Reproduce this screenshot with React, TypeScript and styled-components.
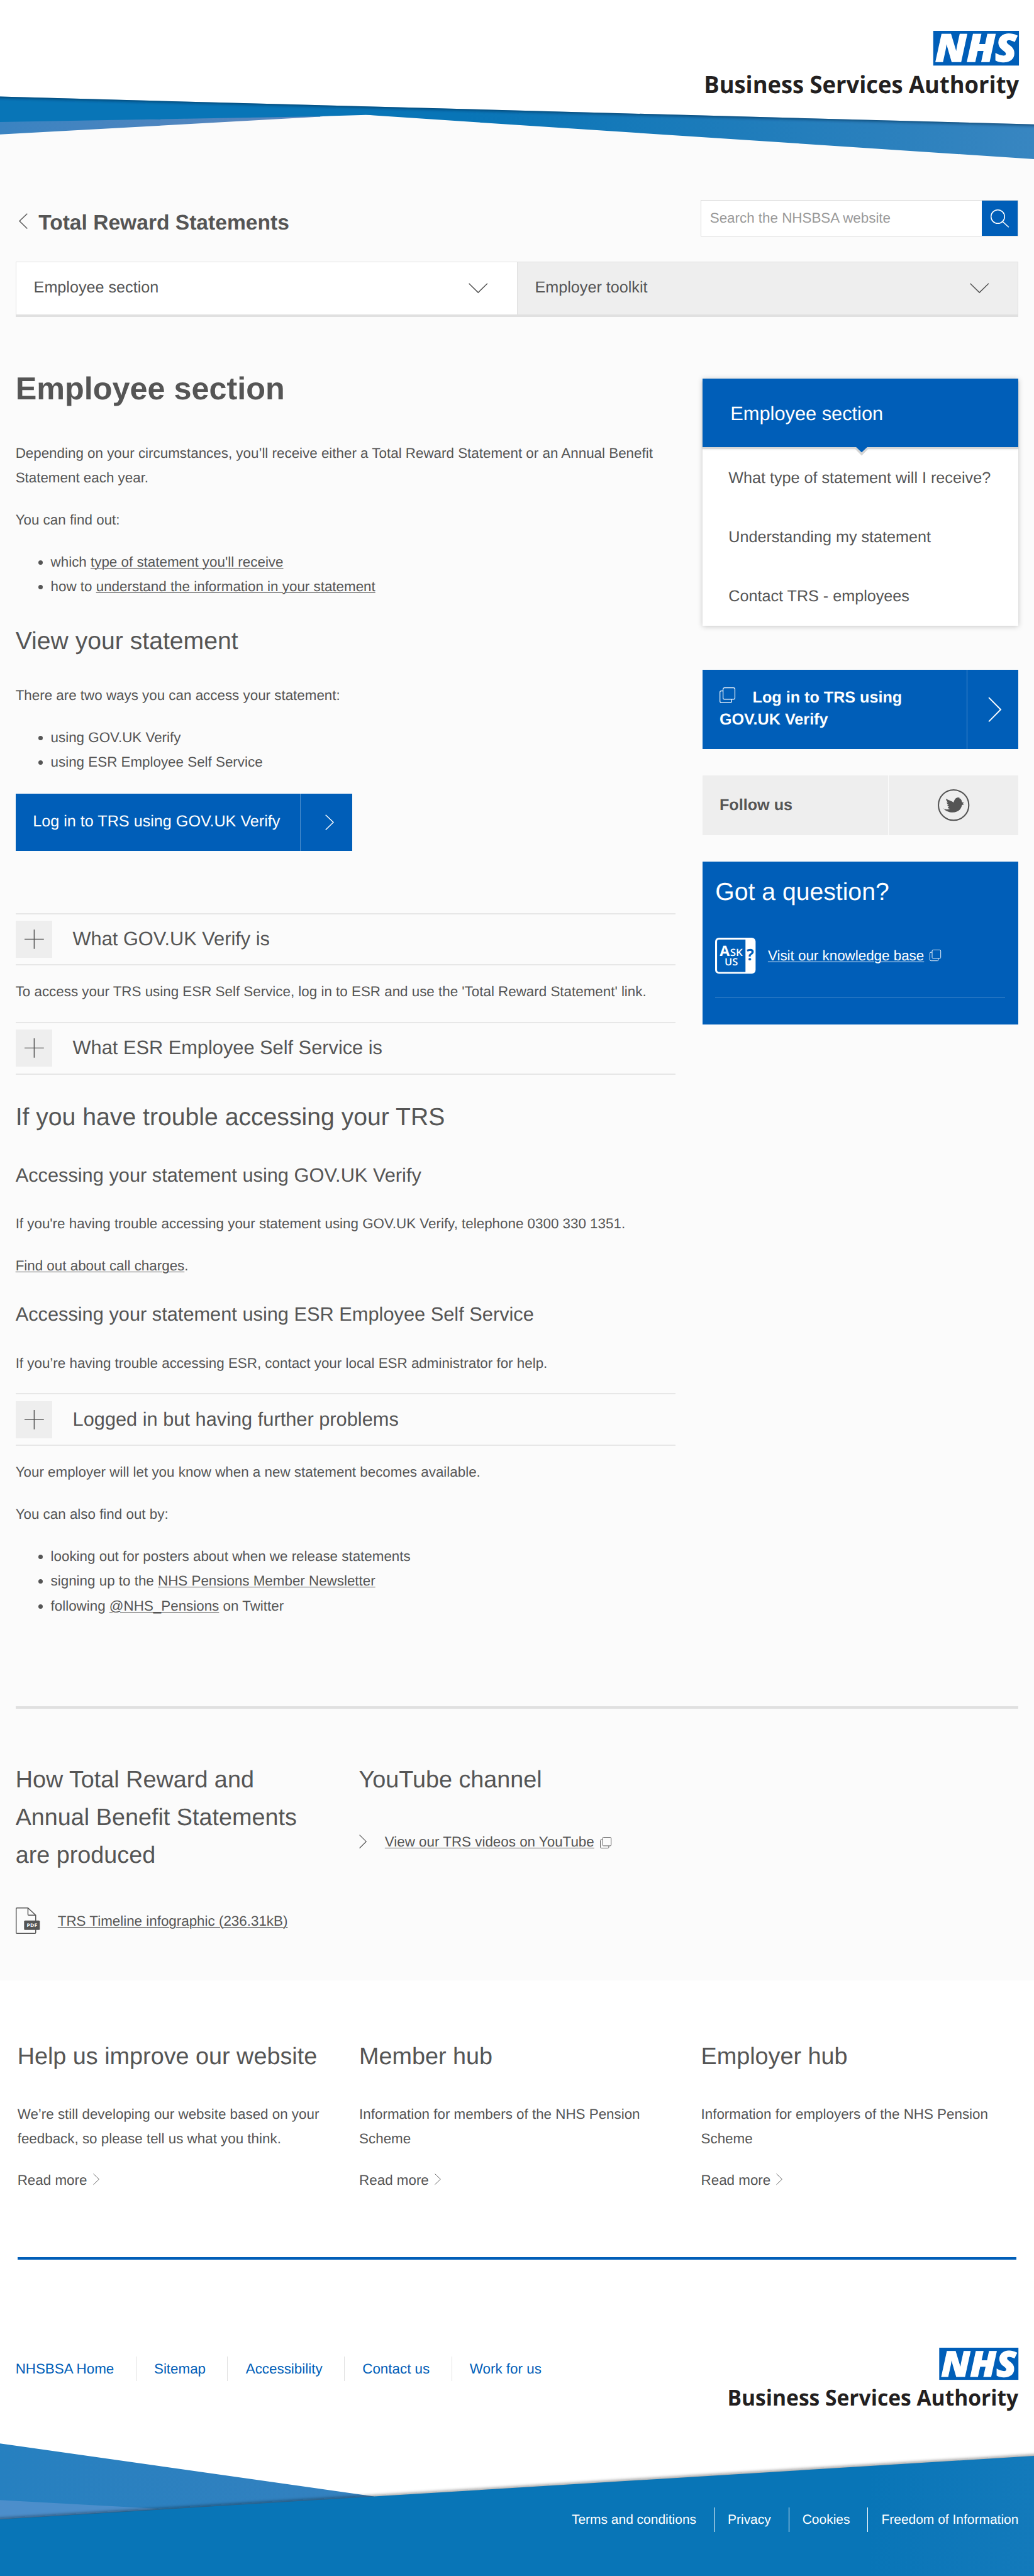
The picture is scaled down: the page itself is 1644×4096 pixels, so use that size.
import React from "react";
import styled, { createGlobalStyle } from "styled-components";

// One design unit, scaled to the page width of 1644px.
const u = (n: number) => `${Math.round(n * 1.39915 * 1000) / 1000}px`;

const ink = "#555555";
const blue = "#005eb8";
const rule = "#e0e0e0";
const softRule = "#e7e7e7";
const paper = "#fbfbfb";

const Global = createGlobalStyle`
  *, *::before, *::after { box-sizing: border-box; }
  body {
    margin: 0;
    background: #fff;
    color: ${ink};
    font-family: "Liberation Sans", Arial, sans-serif;
    font-size: ${u(16)};
    line-height: ${u(28)};
    text-rendering: geometricPrecision;
  }
  h1, h2, h3, p, ul { margin: 0; padding: 0; }
  a { color: inherit; text-decoration: none; }
  svg { display: block; flex: none; }
`;

/* ---------- icons ---------- */

const IconSvg = styled.svg<{ $w: number; $h: number }>`
  width: ${(p) => u(p.$w)};
  height: ${(p) => u(p.$h)};
  fill: none;
  stroke: currentColor;
  overflow: visible;
`;

const CHEVRONS = {
  left: "M9.5 0.5 L0.7 9 L9.5 17.5",
  right: "M0.5 0.5 L9.3 9 L0.5 17.5",
};

const SideChevron = ({ dir, w, h, stroke = 1 }: { dir: "left" | "right"; w: number; h: number; stroke?: number }) => (
  <IconSvg $w={w} $h={h} viewBox="0 0 10 18" preserveAspectRatio="none">
    <path d={CHEVRONS[dir]} strokeWidth={stroke} vectorEffect="non-scaling-stroke" />
  </IconSvg>
);

const DownChevron = () => (
  <IconSvg $w={21.8} $h={11.4} viewBox="0 0 21.8 11.4">
    <path d="M0.4 0.5 L10.9 10.8 L21.4 0.5" strokeWidth="1.05" />
  </IconSvg>
);

const SearchIcon = () => (
  <IconSvg $w={21} $h={20.5} viewBox="0 0 21 20.5">
    <circle cx="8.2" cy="8.2" r="7.7" strokeWidth="1.1" />
    <path d="M13.6 13.8 L20.6 20.2" strokeWidth="1.1" />
  </IconSvg>
);

const PlusIcon = () => (
  <IconSvg $w={22} $h={22} viewBox="0 0 22 22">
    <path d="M11 0 V22 M0 11 H22" strokeWidth="1.05" />
  </IconSvg>
);

const WindowsIcon = ({ w, h, stroke = 1.2 }: { w: number; h: number; stroke?: number }) => (
  <IconSvg $w={w} $h={h} viewBox="0 0 18 18" preserveAspectRatio="none">
    <rect x="4" y="0.5" width="13.5" height="13.3" rx="1.6" strokeWidth={stroke} vectorEffect="non-scaling-stroke" />
    <path
      d="M4 4.1 H2 Q0.5 4.1 0.5 5.6 V16 Q0.5 17.5 2 17.5 H12.3 Q13.8 17.5 13.8 16 V13.8"
      strokeWidth={stroke}
      vectorEffect="non-scaling-stroke"
    />
  </IconSvg>
);

const TwitterIcon = () => (
  <IconSvg $w={36} $h={36} viewBox="0 0 36 36">
    <circle cx="18" cy="18" r="17.25" strokeWidth="1.5" />
    <path
      fill="currentColor"
      stroke="none"
      d="M9.4 10.8 C12.5 12.6 15.6 13.2 18 15.1 C18.6 12.2 20 10 22.2 9.5 C23 9.2 23.8 9 24 9 L23.4 9.8 L24.9 9.5 L24.4 10.2 C26.5 10.7 27.2 12.5 27.5 14.4 C28.4 15 29.2 15.2 30 15.1 C29.6 15.7 29 16 28.3 16.1 C28.9 16.5 29.4 16.6 29.9 16.6 C29.3 17.4 28.4 17.8 27.5 17.8 C26.6 23 22.6 26.3 17 26.3 C12.4 26.3 8.6 24.6 6.3 21.4 C8.6 23 11.6 23.4 13.9 22.1 C12.3 21.9 11.4 21.2 11.3 20.3 L13.1 20 C11.6 19.5 10.9 18.6 10.9 17.7 L12.4 17.8 C11.1 17 10.2 15.9 10.2 14.8 L11.6 15 C10.2 13.8 9.4 12.4 9.4 10.8 Z"
    />
  </IconSvg>
);

const BrandText = styled.text<{ $outline?: number }>`
  font-family: "Open Sans", "Noto Sans", sans-serif;
  stroke: ${(p) => (p.$outline ? "#fff" : "none")};
  stroke-width: ${(p) => p.$outline ?? 0};
`;

const AskUsIcon = () => (
  <IconSvg $w={46} $h={41} viewBox="0 0 46 41">
    <rect width="46" height="41" rx="4.4" fill="#fff" stroke="none" />
    <path d="M34.5 2.1 V38.9 H4.4 Q2.2 38.9 2.2 36.7 V4.3 Q2.2 2.1 4.4 2.1 Z" fill={blue} stroke="none" />
    <BrandText x="5.2" y="20.4" fontSize="16.3" fontWeight="700" fill="#fff" textLength="11.4" lengthAdjust="spacingAndGlyphs">A</BrandText>
    <BrandText x="17" y="20.4" fontSize="11.3" fontWeight="600" fill="#fff" textLength="14.3" lengthAdjust="spacingAndGlyphs">SK</BrandText>
    <BrandText x="10.8" y="31.3" fontSize="11.3" fontWeight="600" fill="#fff" textLength="15.2" lengthAdjust="spacingAndGlyphs">US</BrandText>
    <BrandText x="35.8" y="25.7" fontSize="18" fontWeight="700" fill={blue} textLength="8.4" lengthAdjust="spacingAndGlyphs">?</BrandText>
  </IconSvg>
);

const PdfIcon = () => (
  <IconSvg $w={27.5} $h={30} viewBox="0 0 27.5 30">
    <path
      d="M22.7 25 V28.6 Q22.7 29.5 21.8 29.5 H1.4 Q0.5 29.5 0.5 28.6 V1.4 Q0.5 0.5 1.4 0.5 H13.9 L22.7 8.8 V15 M13.9 0.5 V7.9 Q13.9 8.8 14.8 8.8 H22.7"
      strokeWidth="1.05"
      strokeLinejoin="round"
    />
    <rect x="9.5" y="14.8" width="17.9" height="10.7" rx="1.1" fill="currentColor" stroke="none" />
    <BrandText x="12.6" y="22" fontSize="5.4" fontWeight="700" fill="#fff" textLength="11.8" lengthAdjust="spacingAndGlyphs">PDF</BrandText>
  </IconSvg>
);

/* ---------- logo ---------- */

const LogoSvg = styled.svg<{ $scale: number }>`
  width: ${(p) => u(356 * p.$scale)};
  height: ${(p) => u(80 * p.$scale)};
  overflow: visible;
`;

const Logo = ({ scale = 1 }: { scale?: number }) => (
  <LogoSvg $scale={scale} viewBox="0 0 356 80">
    <rect x="258.6" width="97.4" height="39.5" fill={blue} />
    <BrandText
      $outline={0.9}
      x="260.9"
      y="35.3"
      fontSize="43.6"
      fontWeight="800"
      fontStyle="italic"
      fill="#fff"
      textLength="92.6"
      lengthAdjust="spacingAndGlyphs"
    >
      NHS
    </BrandText>
    <BrandText x="-2" y="70.8" fontSize="27.1" fontWeight="700" fill="#231f20" textLength="358" lengthAdjust="spacingAndGlyphs">
      Business Services Authority
    </BrandText>
  </LogoSvg>
);

/* ---------- layout ---------- */

const Page = styled.div`
  width: ${u(1175)};
  height: 4096px;
  overflow: hidden;
  background: #fff;
`;

const Grey = styled.div`
  height: ${u(2251 - 185)};
  background: ${paper};
`;

const Stack = styled.div<{ $h: number }>`
  display: grid;
  height: ${(p) => u(p.$h)};
  & > * {
    grid-area: 1 / 1;
  }
`;

const Wave = styled.svg`
  width: 100%;
  height: 100%;
`;

const HeaderLogo = styled.div`
  justify-self: end;
  align-self: start;
  padding: ${u(34.8)} ${u(17.4)} 0 0;
`;

const TopBar = styled.div`
  display: flex;
  align-items: flex-start;
  height: ${u(84)};
  padding: ${u(42)} ${u(17.6)} 0 ${u(21.6)};
`;

const BackLink = styled.a`
  padding-top: ${u(15.2)};
`;

const SiteTitle = styled.h2`
  margin: ${u(11.6)} auto 0 ${u(12.1)};
  font-size: ${u(24)};
  line-height: ${u(30)};
`;

const SearchForm = styled.form`
  display: flex;
  width: ${u(361.4)};
  height: ${u(42)};
  border: ${u(1)} solid #dbdbdb;
  background: #fff;
`;

const SearchInput = styled.input`
  flex: 1;
  min-width: 0;
  border: 0;
  padding: 0 ${u(10)} ${u(0.4)};
  background: none;
  font: inherit;
  color: ${ink};
  text-rendering: geometricPrecision;
  &::placeholder {
    color: #999;
    opacity: 1;
  }
`;

const SearchButton = styled.button`
  display: flex;
  align-items: center;
  justify-content: center;
  width: ${u(41)};
  border: 0;
  padding: 0;
  background: ${blue};
  color: #fff;
`;

const Tabs = styled.nav`
  display: flex;
  margin: ${u(28)} ${u(17.6)} 0;
  height: ${u(63)};
  border: ${u(1)} solid ${rule};
  border-bottom-width: ${u(3)};
`;

const Tab = styled.a<{ $active?: boolean }>`
  display: flex;
  flex: 1;
  align-items: center;
  justify-content: space-between;
  padding: 0 ${u(32.8)} 0 ${u(20)};
  background: ${(p) => (p.$active ? "#fff" : "#eeeeee")};
  border-left: ${(p) => (p.$active ? "0" : u(1))} solid ${rule};
  font-size: ${u(18)};
`;

const TabLabel = styled.span`
  padding-bottom: ${u(0.6)};
`;

const Main = styled.main`
  display: flex;
  justify-content: space-between;
  height: ${u(1939 - 360)};
  padding: 0 ${u(17.6)};
`;

const Article = styled.article`
  width: ${u(750.2)};
  padding-top: ${u(54.7)};
`;

const H1 = styled.h1`
  font-size: ${u(36)};
  line-height: ${u(54)};
`;

const H2 = styled.h2<{ $mt?: number; $size?: number }>`
  margin-top: ${(p) => u(p.$mt ?? 0)};
  font-size: ${(p) => u(p.$size ?? 28)};
  line-height: ${u(43)};
  font-weight: 400;
`;

const H3 = styled.h3<{ $mt?: number }>`
  margin-top: ${(p) => u(p.$mt ?? 0)};
  font-size: ${u(22)};
  line-height: ${u(34)};
  font-weight: 400;
`;

const P = styled.p<{ $mt?: number }>`
  margin-top: ${(p) => u(p.$mt ?? 20)};
`;

const List = styled.ul`
  && {
    margin-top: ${u(20)};
    padding-left: ${u(40)};
  }
`;

const Link = styled.a`
  text-decoration: underline;
  text-decoration-thickness: ${u(1)};
  text-underline-offset: ${u(1.2)};
`;

const ActionButton = styled.a`
  display: flex;
  width: ${u(382.4)};
  height: ${u(65)};
  margin-top: ${u(22.4)};
  background: ${blue};
  color: #fff;
  font-size: ${u(18)};
  line-height: ${u(63)};
`;

const ActionLabel = styled.span`
  width: ${u(323.3)};
  padding-left: ${u(19.7)};
  white-space: nowrap;
`;

const ActionArrow = styled.span`
  display: flex;
  flex: 1;
  align-items: center;
  padding-left: ${u(28)};
  border-left: ${u(1)} solid #4d8ecd;
`;

const AccordionBar = styled.div<{ $mt: number }>`
  display: flex;
  align-items: center;
  height: ${u(60)};
  margin-top: ${(p) => u(p.$mt)};
  border: solid ${softRule};
  border-width: 2px 0;
  font-size: ${u(22)};
`;

const PlusBox = styled.span`
  display: flex;
  align-items: center;
  justify-content: center;
  width: ${u(42)};
  height: ${u(42)};
  margin-right: ${u(23)};
  background: #eeeeee;
`;

const AccordionLabel = styled.span`
  padding-bottom: ${u(1.4)};
`;

const Accordion = ({ mt, title }: { mt: number; title: string }) => (
  <AccordionBar $mt={mt}>
    <PlusBox>
      <PlusIcon />
    </PlusBox>
    <AccordionLabel>{title}</AccordionLabel>
  </AccordionBar>
);

const Sidebar = styled.aside`
  width: ${u(359.2)};
  padding-top: ${u(70)};
`;

const SideMenu = styled.nav`
  height: ${u(281.2)};
  background: #fff;
  box-shadow: 0 ${u(1)} ${u(6)} rgba(0, 0, 0, 0.22);
`;

const SideMenuTitle = styled.div`
  position: relative;
  height: ${u(78.2)};
  padding-left: ${u(31.8)};
  background: ${blue};
  box-shadow: 0 ${u(2)} 0 #d5d5d5, 0 ${u(3)} ${u(2)} rgba(0, 0, 0, 0.15);
  color: #fff;
  font-size: ${u(22)};
  line-height: ${u(79.4)};
`;

const Pointer = styled.svg`
  position: absolute;
  left: ${u(171.2)};
  top: ${u(78)};
  width: ${u(20)};
  height: ${u(10)};
`;

const SideMenuList = styled.div`
  padding-top: ${u(2.5)};
`;

const SideMenuItem = styled.a`
  display: block;
  padding-left: ${u(29.6)};
  font-size: ${u(18)};
  line-height: ${u(67)};
`;

const LoginPanel = styled.a`
  display: flex;
  height: ${u(90)};
  margin-top: ${u(49.9)};
  background: ${blue};
  color: #fff;
  font-size: ${u(18)};
  font-weight: 700;
  line-height: ${u(25)};
`;

const LoginText = styled.span`
  width: ${u(300.1)};
  padding: ${u(19.2)} 0 0 ${u(19.4)};
`;

const LoginFirstLine = styled.span`
  display: flex;
  gap: ${u(19.6)};
`;

const LoginIcon = styled.span`
  padding-top: ${u(1.1)};
`;

const LoginArrow = styled.span`
  display: flex;
  flex: 1;
  align-items: center;
  padding-left: ${u(24)};
  border-left: ${u(1)} solid #4d8ecd;
`;

const FollowRow = styled.div`
  display: grid;
  grid-template-columns: ${u(211)} 1fr;
  gap: ${u(1)};
  height: ${u(68)};
  margin-top: ${u(30)};
`;

const FollowCell = styled.div<{ $center?: boolean }>`
  display: flex;
  align-items: center;
  justify-content: ${(p) => (p.$center ? "center" : "flex-start")};
  padding-left: ${(p) => (p.$center ? "0" : u(19.4))};
  background: #eeeeee;
  font-size: ${u(18)};
  font-weight: 700;
`;

const QuestionPanel = styled.section`
  height: ${u(185)};
  margin-top: ${u(30)};
  padding: ${u(14)} ${u(15)} 0 ${u(14.6)};
  background: ${blue};
  color: #fff;
`;

const QuestionRow = styled.div`
  display: flex;
  align-items: center;
  height: ${u(68)};
  margin-top: ${u(29.4)};
  padding-bottom: ${u(26.6)};
  border-bottom: ${u(1)} solid #4d8ecd;
`;

const QuestionLink = styled(Link)`
  margin: 0 ${u(6.6)} 0 ${u(13.8)};
`;

const Divider = styled.hr<{ $color: string; $inset: number; $mt?: number }>`
  height: ${u(3)};
  margin: ${(p) => u(p.$mt ?? 0)} ${(p) => u(p.$inset)} 0;
  border: 0;
  background: ${(p) => p.$color};
`;

const Resources = styled.section`
  display: flex;
  gap: ${u(40.2)};
  padding: ${u(59.3)} ${u(17.6)} 0;
`;

const ResourceColumn = styled.div`
  width: ${u(350)};
`;

const ResourceRow = styled.div<{ $mt: number; $gap: number }>`
  display: flex;
  align-items: center;
  gap: ${(p) => u(p.$gap)};
  height: ${u(30)};
  margin-top: ${(p) => u(p.$mt)};
  white-space: nowrap;
`;

const TrailingIcon = styled.span`
  margin-left: ${u(-14.2)};
  padding-top: ${u(3)};
`;

const Hubs = styled.section`
  display: grid;
  grid-template-columns: repeat(3, ${u(388.4)});
  padding: ${u(64.4)} 0 0 ${u(19.8)};
`;

const HubText = styled(P)`
  width: ${u(350)};
`;

const ReadMore = styled.a`
  display: flex;
  align-items: flex-start;
  gap: ${u(6.6)};
  margin-top: ${u(19)};
`;

const ReadMoreArrow = styled.span`
  padding-top: ${u(6.6)};
`;

const FooterTop = styled.div`
  display: flex;
  justify-content: space-between;
  align-items: flex-start;
  height: ${u(192.2)};
  padding: ${u(100.2)} ${u(17.4)} 0 ${u(17.6)};
`;

const FooterLinks = styled.nav`
  display: flex;
  margin-top: ${u(10)};
  color: ${blue};
`;

const FooterLink = styled.a`
  height: ${u(28)};
  & + & {
    margin-left: ${u(24.6)};
    padding-left: ${u(20.2)};
    border-left: ${u(1)} solid ${rule};
  }
`;

const LegalLinks = styled.nav`
  display: flex;
  justify-self: end;
  align-self: start;
  padding: ${u(89.3)} ${u(17.6)} 0 0;
  color: #fff;
  font-size: ${u(15)};
`;

const LegalLink = styled.a`
  height: ${u(28)};
  & + & {
    margin-left: ${u(20)};
    padding-left: ${u(15)};
    border-left: ${u(1)} solid #fff;
  }
`;

/* ---------- waves ---------- */

const HEAD_BODY = "M0 109.8 L1175 141.3 V180.8 L425 131.2 Q419 130.4 410 130.8 L367 132.1 L0 138.6 Z";

const HeaderWave = () => (
  <Wave viewBox="0 0 1175 185" preserveAspectRatio="none">
    <defs>
      <linearGradient id="headBody" x1="0" x2="1">
        <stop offset="0" stopColor="#0875b7" />
        <stop offset="0.45" stopColor="#0875b7" />
        <stop offset="0.85" stopColor="#2a80bd" />
        <stop offset="1" stopColor="#3886c1" />
      </linearGradient>
      <linearGradient id="headWedge" x1="0" x2="1">
        <stop offset="0" stopColor="#3a83c1" />
        <stop offset="1" stopColor="#6087bd" />
      </linearGradient>
      <clipPath id="headClip">
        <path d={HEAD_BODY} />
      </clipPath>
      <filter id="headBlur" x="-5%" y="-50%" width="110%" height="200%">
        <feGaussianBlur stdDeviation="1.6" />
      </filter>
    </defs>
    <path d="M0 109.8 L1175 141.3 V186 H0 Z" fill={paper} />
    <path d="M0 138 L375 131.6 L355 133.2 L0 152.8 Z" fill="url(#headWedge)" />
    <path d={HEAD_BODY} fill="url(#headBody)" />
    <g clipPath="url(#headClip)">
      <path d="M-20 108.4 L1195 141" stroke="#0a2f52" strokeOpacity="0.62" strokeWidth="5" fill="none" filter="url(#headBlur)" />
    </g>
  </Wave>
);

const FooterWave = () => (
  <Wave viewBox="0 2760 1175 168" preserveAspectRatio="none">
    <defs>
      <linearGradient id="footBody" x1="0" x2="1">
        <stop offset="0.84" stopColor="#0875b7" />
        <stop offset="0.9" stopColor="#0d77b9" />
        <stop offset="1" stopColor="#137abb" />
      </linearGradient>
      <linearGradient id="footSky" x1="0" x2="1">
        <stop offset="0" stopColor="#2680c0" />
        <stop offset="1" stopColor="#3481bf" />
      </linearGradient>
      <filter id="footBlur" x="-5%" y="-50%" width="110%" height="200%">
        <feGaussianBlur stdDeviation="2" />
      </filter>
    </defs>
    <path d="M0 2776.6 L425 2836.9 V2863 H0 Z" fill="url(#footSky)" />
    <path d="M0 2840.9 L185 2851 L0 2863 Z" fill="#4c8ecb" />
    <path d="M-20 2865.2 L425 2838 L1195 2790.6" stroke="#1a1a1a" strokeOpacity="0.45" strokeWidth="5" fill="none" filter="url(#footBlur)" />
    <path d="M0 2863 L425 2836.9 L1175 2790.8 V2930 H0 Z" fill="url(#footBody)" />
  </Wave>
);

const HUBS = [
  { title: "Help us improve our website", text: "We’re still developing our website based on your feedback, so please tell us what you think." },
  { title: "Member hub", text: "Information for members of the NHS Pension Scheme" },
  { title: "Employer hub", text: "Information for employers of the NHS Pension Scheme" },
];

export default function App() {
  return (
    <Page>
      <Global />
      <Stack $h={185}>
        <HeaderWave />
        <HeaderLogo>
          <Logo />
        </HeaderLogo>
      </Stack>

      <Grey>
        <TopBar>
          <BackLink>
            <SideChevron dir="left" w={10} h={18} stroke={1.4} />
          </BackLink>
          <SiteTitle>Total Reward Statements</SiteTitle>
          <SearchForm>
            <SearchInput placeholder="Search the NHSBSA website" />
            <SearchButton type="button">
              <SearchIcon />
            </SearchButton>
          </SearchForm>
        </TopBar>

        <Tabs>
          <Tab $active>
            <TabLabel>Employee section</TabLabel>
            <DownChevron />
          </Tab>
          <Tab>
            <TabLabel>Employer toolkit</TabLabel>
            <DownChevron />
          </Tab>
        </Tabs>

        <Main>
          <Article>
            <H1>Employee section</H1>
            <P $mt={32.25}>
              Depending on your circumstances, you’ll receive either a Total Reward Statement or an Annual Benefit Statement each year.
            </P>
            <P>You can find out:</P>
            <List>
              <li>
                which <Link>type of statement you'll receive</Link>
              </li>
              <li>
                how to <Link>understand the information in your statement</Link>
              </li>
            </List>
            <H2 $mt={26.8}>View your statement</H2>
            <P $mt={25.3}>There are two ways you can access your statement:</P>
            <List>
              <li>using GOV.UK Verify</li>
              <li>using ESR Employee Self Service</li>
            </List>
            <ActionButton>
              <ActionLabel>Log in to TRS using GOV.UK Verify</ActionLabel>
              <ActionArrow>
                <SideChevron dir="right" w={10} h={18} stroke={1.4} />
              </ActionArrow>
            </ActionButton>
            <Accordion mt={70.1} title="What GOV.UK Verify is" />
            <P $mt={15.4}>To access your TRS using ESR Self Service, log in to ESR and use the 'Total Reward Statement' link.</P>
            <Accordion mt={20.5} title="What ESR Employee Self Service is" />
            <H2 $mt={27.2}>If you have trouble accessing your TRS</H2>
            <H3 $mt={27.1}>Accessing your statement using GOV.UK Verify</H3>
            <P $mt={24.2}>If you're having trouble accessing your statement using GOV.UK Verify, telephone 0300 330 1351.</P>
            <P>
              <Link>Find out about call charges</Link>.
            </P>
            <H3 $mt={23.8}>Accessing your statement using ESR Employee Self Service</H3>
            <P $mt={24.5}>If you’re having trouble accessing ESR, contact your local ESR administrator for help.</P>
            <Accordion mt={20.4} title="Logged in but having further problems" />
            <P $mt={15.4}>Your employer will let you know when a new statement becomes available.</P>
            <P>You can also find out by:</P>
            <List>
              <li>looking out for posters about when we release statements</li>
              <li>
                signing up to the <Link>NHS Pensions Member Newsletter</Link>
              </li>
              <li>
                following <Link>@NHS_Pensions</Link> on Twitter
              </li>
            </List>
          </Article>

          <Sidebar>
            <SideMenu>
              <SideMenuTitle>
                Employee section
                <Pointer viewBox="0 0 20 10">
                  <path d="M0.5 0 L10 9.7 L19.5 0 Z" fill="#d5d5d5" />
                  <path d="M3.7 0 L10 5.9 L16.3 0 Z" fill={blue} />
                </Pointer>
              </SideMenuTitle>
              <SideMenuList>
                <SideMenuItem>What type of statement will I receive?</SideMenuItem>
                <SideMenuItem>Understanding my statement</SideMenuItem>
                <SideMenuItem>Contact TRS - employees</SideMenuItem>
              </SideMenuList>
            </SideMenu>

            <LoginPanel>
              <LoginText>
                <LoginFirstLine>
                  <LoginIcon>
                    <WindowsIcon w={18} h={17.6} />
                  </LoginIcon>
                  Log in to TRS using
                </LoginFirstLine>
                GOV.UK Verify
              </LoginText>
              <LoginArrow>
                <SideChevron dir="right" w={15.4} h={29} stroke={1.9} />
              </LoginArrow>
            </LoginPanel>

            <FollowRow>
              <FollowCell>Follow us</FollowCell>
              <FollowCell $center>
                <TwitterIcon />
              </FollowCell>
            </FollowRow>

            <QuestionPanel>
              <H2>Got a question?</H2>
              <QuestionRow>
                <AskUsIcon />
                <QuestionLink>Visit our knowledge base</QuestionLink>
                <WindowsIcon w={13} h={13} stroke={0.9} />
              </QuestionRow>
            </QuestionPanel>
          </Sidebar>
        </Main>

        <Divider $color={rule} $inset={17.6} />
        <Resources>
          <ResourceColumn>
            <H2 $size={27}>How Total Reward and Annual Benefit Statements are produced</H2>
            <ResourceRow $mt={37.7} $gap={20.5}>
              <PdfIcon />
              <Link>TRS Timeline infographic (236.31kB)</Link>
            </ResourceRow>
          </ResourceColumn>
          <ResourceColumn>
            <H2 $size={27}>YouTube channel</H2>
            <ResourceRow $mt={33.7} $gap={20.9}>
              <SideChevron dir="right" w={8.6} h={16} stroke={1.2} />
              <Link>View our TRS videos on YouTube</Link>
              <TrailingIcon>
                <WindowsIcon w={13} h={13} stroke={0.9} />
              </TrailingIcon>
            </ResourceRow>
          </ResourceColumn>
        </Resources>
      </Grey>

      <Hubs>
        {HUBS.map((hub) => (
          <div key={hub.title}>
            <H2 $size={27}>{hub.title}</H2>
            <HubText $mt={30.3}>{hub.text}</HubText>
            <ReadMore>
              Read more
              <ReadMoreArrow>
                <SideChevron dir="right" w={7.2} h={13} stroke={0.9} />
              </ReadMoreArrow>
            </ReadMore>
          </div>
        ))}
      </Hubs>
      <Divider $color={blue} $inset={20} $mt={73.2} />

      <FooterTop>
        <FooterLinks>
          <FooterLink>NHSBSA Home</FooterLink>
          <FooterLink>Sitemap</FooterLink>
          <FooterLink>Accessibility</FooterLink>
          <FooterLink>Contact us</FooterLink>
          <FooterLink>Work for us</FooterLink>
        </FooterLinks>
        <Logo scale={0.924} />
      </FooterTop>

      <Stack $h={168}>
        <FooterWave />
        <LegalLinks>
          <LegalLink>Terms and conditions</LegalLink>
          <LegalLink>Privacy</LegalLink>
          <LegalLink>Cookies</LegalLink>
          <LegalLink>Freedom of Information</LegalLink>
        </LegalLinks>
      </Stack>
    </Page>
  );
}
